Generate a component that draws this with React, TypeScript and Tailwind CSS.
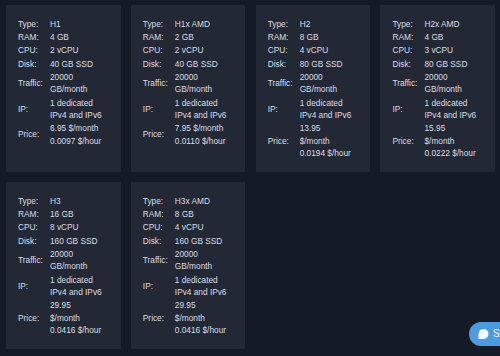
import React from "react";

type Plan = {
  type: string;
  ram: string;
  cpu: string;
  disk: string;
  price: string[];
};

const plans: Plan[] = [
  { type: "H1", ram: "4 GB", cpu: "2 vCPU", disk: "40 GB SSD", price: ["6.95 $/month", "0.0097 $/hour"] },
  { type: "H1x AMD", ram: "2 GB", cpu: "2 vCPU", disk: "40 GB SSD", price: ["7.95 $/month", "0.0110 $/hour"] },
  { type: "H2", ram: "8 GB", cpu: "4 vCPU", disk: "80 GB SSD", price: ["13.95", "$/month", "0.0194 $/hour"] },
  { type: "H2x AMD", ram: "4 GB", cpu: "3 vCPU", disk: "80 GB SSD", price: ["15.95", "$/month", "0.0222 $/hour"] },
  { type: "H3", ram: "16 GB", cpu: "8 vCPU", disk: "160 GB SSD", price: ["29.95", "$/month", "0.0416 $/hour"] },
  { type: "H3x AMD", ram: "8 GB", cpu: "4 vCPU", disk: "160 GB SSD", price: ["29.95", "$/month", "0.0416 $/hour"] },
];

function Row({ label, lines }: { label: string; lines: string[] }) {
  return (
    <>
      <div className="flex items-center py-[0.5px]">{label}</div>
      <div className="py-[0.5px]">
        {lines.map((l, i) => (
          <div key={i} className="whitespace-nowrap">
            {l}
          </div>
        ))}
      </div>
    </>
  );
}

function Card({ p }: { p: Plan }) {
  return (
    <div className="bg-[#222834] px-3 py-[12.3px]">
      <div className="grid grid-cols-[32px_1fr] content-start">
        <Row label="Type:" lines={[p.type]} />
        <Row label="RAM:" lines={[p.ram]} />
        <Row label="CPU:" lines={[p.cpu]} />
        <Row label="Disk:" lines={[p.disk]} />
        <Row label="Traffic:" lines={["20000", "GB/month"]} />
        <Row label="IP:" lines={["1 dedicated", "IPv4 and IPv6"]} />
        <Row label="Price:" lines={p.price} />
      </div>
    </div>
  );
}

export default function App() {
  return (
    <div
      className="relative w-[500px] h-[356px] overflow-hidden bg-[#141a26] text-[#dcdfe5] text-[8.3px] leading-[12.32px]"
      style={{ fontFamily: '"Liberation Sans", Arial, sans-serif' }}
    >
      <div className="grid grid-cols-4 gap-x-[10.33px] gap-y-[10px] pl-[6px] pr-[5px] pt-[5px]">
        {plans.map((p) => (
          <Card key={p.type} p={p} />
        ))}
      </div>
      <div className="absolute left-[469px] top-[322px] h-[24px] flex items-center gap-[4px] rounded-full bg-[#4a9be0] pl-[9px] pr-4 text-white text-[10px] font-medium whitespace-nowrap">
        <svg width="11" height="10" viewBox="0 0 11 10">
          <path d="M5.5 0 A5 5 0 1 1 5.5 10 L1.2 10 Q0.5 10 0.5 9.3 L0.5 5 A5 5 0 0 1 5.5 0 Z" fill="#fff" />
        </svg>
        <span>Support</span>
      </div>
    </div>
  );
}
